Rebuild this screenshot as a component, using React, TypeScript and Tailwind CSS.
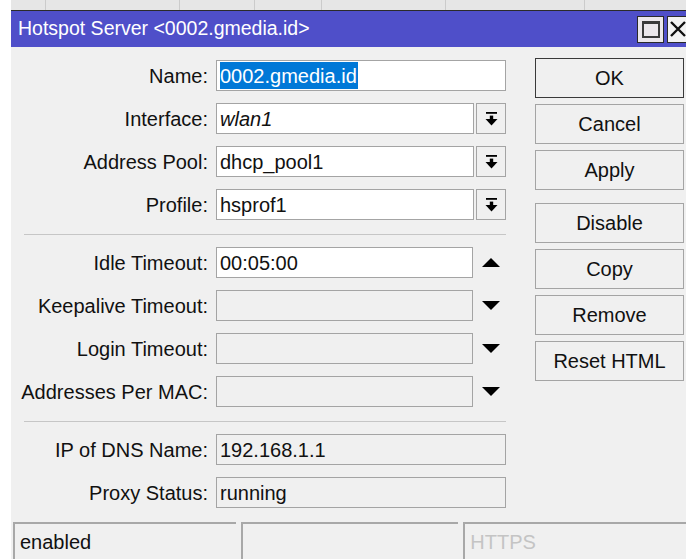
import type { ReactNode } from "react";

const font = { fontFamily: '"Liberation Sans", Arial, sans-serif' };

function DropIcon() {
  return (
    <svg width="13" height="14" viewBox="0 0 13 14">
      <rect x="1" y="0" width="11" height="1.8" fill="#000" />
      <rect x="4.8" y="3.6" width="3.4" height="3.4" fill="#000" />
      <polygon points="0.5,7 12.5,7 6.5,13.5" fill="#000" />
    </svg>
  );
}

function Triangle({ up }: { up?: boolean }) {
  return (
    <svg width="18" height="9" viewBox="0 0 18 9">
      <polygon points={up ? "0,9 18,9 9,0" : "0,0 18,0 9,9"} fill="#000" />
    </svg>
  );
}

function Field({ children, disabled }: { children?: ReactNode; disabled?: boolean }) {
  return (
    <div
      className={`flex-1 h-[31px] flex items-center pl-[3px] border border-[#a4a4a4] text-[20px] text-[#111] whitespace-nowrap overflow-hidden ${
        disabled ? "bg-[#f0f0f0]" : "bg-white"
      }`}
    >
      {children}
    </div>
  );
}

function Row({ label, children }: { label: string; children: ReactNode }) {
  return (
    <div className="flex items-center h-[31px]">
      <div className="w-[197px] text-right text-[20px] text-[#111] whitespace-nowrap">{label}</div>
      <div className="ml-[8px] w-[290px] flex items-center h-full">{children}</div>
    </div>
  );
}

function ComboRow({ label, value, italic }: { label: string; value: string; italic?: boolean }) {
  return (
    <Row label={label}>
      <Field>
        <span className={italic ? "italic" : ""}>{value}</span>
      </Field>
      <div className="ml-[2px] w-[30px] h-[31px] border border-[#a4a4a4] bg-[#f0f0f0] flex items-center justify-center">
        <DropIcon />
      </div>
    </Row>
  );
}

function TimeRow({ label, value, up }: { label: string; value?: string; up?: boolean }) {
  return (
    <Row label={label}>
      <Field disabled={!value}>{value}</Field>
      <div className="w-[33px] flex items-center justify-center pl-[3px]">
        <Triangle up={up} />
      </div>
    </Row>
  );
}

function Separator() {
  return <div className="ml-[13px] w-[482px] h-px bg-[#c6c6c6]" />;
}

function Btn({ label, primary }: { label: string; primary?: boolean }) {
  return (
    <button
      className={`w-[149px] h-[40px] bg-[#f0f0f0] border text-[20px] text-[#111] ${
        primary ? "border-[#3a3a3a]" : "border-[#a4a4a4]"
      }`}
    >
      {label}
    </button>
  );
}

const headerCols = [35, 134, 75, 67, 124, 139];

export default function App() {
  return (
    <div className="w-[686px] h-[559px] overflow-hidden bg-white flex" style={font}>
      <div className="w-[11px] shrink-0 bg-white" />

      <div className="flex-1 flex flex-col">
        {/* list header peeking out behind the window */}
        <div className="h-[10px] bg-[#e6e6e6] flex">
          {headerCols.map((w, i) => (
            <div key={i} style={{ width: w }} className="h-full border-r border-[#cbcbcb]" />
          ))}
        </div>
        <div className="h-px bg-[#2b2b2b]" />

        <header className="h-[36px] bg-[#4f4fc9] flex items-center pl-[7px]">
          <span className="text-white text-[19.5px] flex-1">Hotspot Server &lt;0002.gmedia.id&gt;</span>
          <div className="w-[27px] h-[27px] border border-[#2a2a2a] bg-[#ebe7eb] flex items-center justify-center">
            <div className="w-[18px] h-[17px] border-2 border-t-[3px] border-[#3a3a3a]" />
          </div>
          <div className="ml-[3px] w-[19px] h-[27px] border border-r-0 border-[#2a2a2a] bg-[#f3f3f3] flex items-center overflow-hidden">
            <svg width="18" height="18" viewBox="0 0 18 18" className="ml-[1px] shrink-0">
              <path d="M2 2 L16 16 M16 2 L2 16" stroke="#111" strokeWidth="2.4" />
            </svg>
          </div>
        </header>

        <main className="flex-1 bg-[#f0f0f0] flex flex-col">
          <div className="flex flex-1">
            <div className="w-[495px] flex flex-col pt-[13px]">
              <div className="flex flex-col gap-[12px]">
                <Row label="Name:">
                  <Field>
                    <span className="bg-[#0078d7] text-white h-[27px] flex items-center pr-[1px]">0002.gmedia.id</span>
                  </Field>
                </Row>
                <ComboRow label="Interface:" value="wlan1" italic />
                <ComboRow label="Address Pool:" value="dhcp_pool1" />
                <ComboRow label="Profile:" value="hsprof1" />
              </div>

              <div className="mt-[14px] mb-[12px]">
                <Separator />
              </div>

              <div className="flex flex-col gap-[12px]">
                <TimeRow label="Idle Timeout:" value="00:05:00" up />
                <TimeRow label="Keepalive Timeout:" />
                <TimeRow label="Login Timeout:" />
                <TimeRow label="Addresses Per MAC:" />
              </div>

              <div className="mt-[14px] mb-[12px]">
                <Separator />
              </div>

              <div className="flex flex-col gap-[12px]">
                <Row label="IP of DNS Name:">
                  <Field disabled>192.168.1.1</Field>
                </Row>
                <Row label="Proxy Status:">
                  <Field disabled>running</Field>
                </Row>
              </div>
            </div>

            <div className="ml-[29px] pt-[11px] flex flex-col">
              <div className="flex flex-col gap-[6px]">
                <Btn label="OK" primary />
                <Btn label="Cancel" />
                <Btn label="Apply" />
              </div>
              <div className="mt-[13px] flex flex-col gap-[6px]">
                <Btn label="Disable" />
                <Btn label="Copy" />
                <Btn label="Remove" />
                <Btn label="Reset HTML" />
              </div>
            </div>
          </div>

          <footer className="h-[37px] pl-[2px] flex gap-[5px]">
            <div className="flex-1 border-t-2 border-l-2 border-[#a8a8a8] flex items-center pl-[5px] text-[20px] text-[#111]">
              enabled
            </div>
            <div className="flex-1 border-t-2 border-l-2 border-[#a8a8a8]" />
            <div className="flex-1 border-t-2 border-l-2 border-[#a8a8a8] flex items-center pl-[5px] text-[20px] text-[#c4c4c4]">
              HTTPS
            </div>
          </footer>
        </main>
      </div>
    </div>
  );
}
